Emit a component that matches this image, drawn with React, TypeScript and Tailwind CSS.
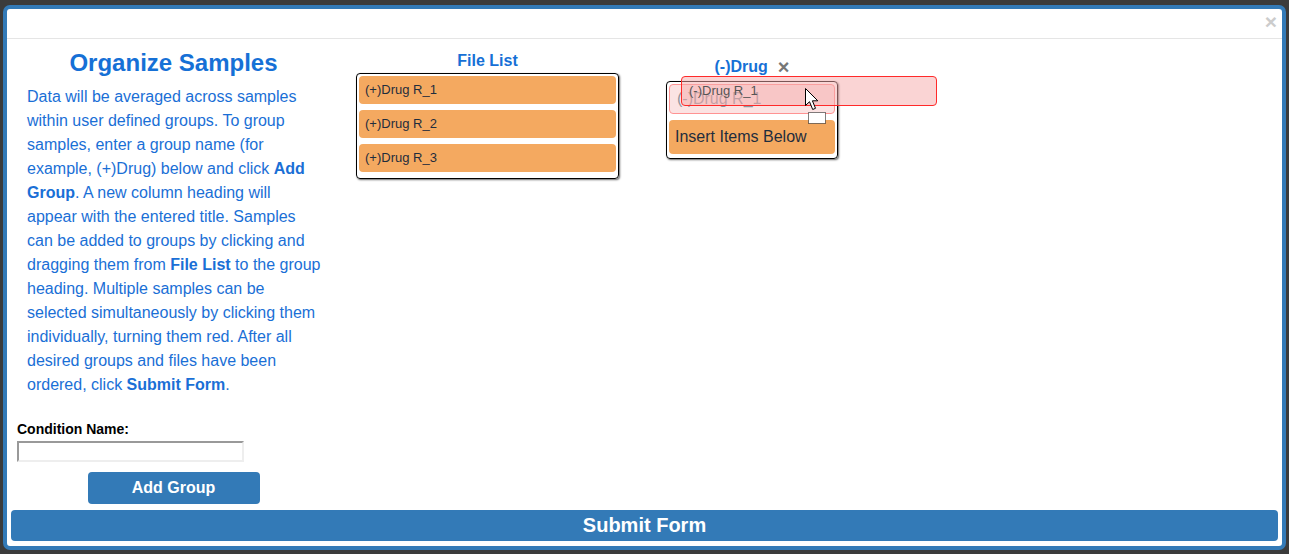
import React from 'react';

const files = ['(+)Drug R_1', '(+)Drug R_2', '(+)Drug R_3'];

function Cursor() {
  return (
    <svg width="26" height="40" viewBox="0 0 26 40" className="absolute left-[804px] top-[87px]">
      <path
        d="M1.5 1.5 L1.5 18.5 L5.5 14.7 L8.7 22.5 L11.5 21.3 L8.4 13.8 L13.8 13.8 Z"
        fill="white"
        stroke="black"
        strokeWidth="1"
      />
      <rect x="4.5" y="25.5" width="17" height="11" fill="white" stroke="black" strokeWidth="1" strokeDasharray="1 1" />
    </svg>
  );
}

export default function App() {
  return (
    <div className="w-[1289px] h-[554px] bg-[#3b3b3b] pt-[5px] pl-[3px] font-['Liberation_Sans',Arial,sans-serif]">
      <div className="relative w-[1283px] h-[545px] bg-white border-4 border-[#337ab7] rounded-[7px] flex flex-col">
        <div className="h-[31px] border-b border-[#e5e5e5] flex justify-end items-start pr-[5px]">
          <span className="text-[21px] leading-[26px] font-bold text-[#cccccc]">×</span>
        </div>

        <div className="flex-1 flex">
          {/* instructions column */}
          <div className="w-[313px] ml-[10px] flex flex-col">
            <h1 className="mt-[10px] h-[28px] text-center text-[24px] leading-[28px] font-bold text-[#1670d6]">
              Organize Samples
            </h1>
            <p className="mt-[8px] ml-[10px] w-[296px] text-[16px] leading-[24px] text-[#1a6fd6]">
              Data will be averaged across samples within user defined groups. To group samples, enter a group
              name (for example, (+)Drug) below and click <b>Add Group</b>. A new column heading will appear with
              the entered title. Samples can be added to groups by clicking and dragging them from{' '}
              <b>File List</b> to the group heading. Multiple samples can be selected simultaneously by clicking
              them individually, turning them red. After all desired groups and files have been ordered, click{' '}
              <b>Submit Form</b>.
            </p>
            <label className="mt-[24px] text-[14px] leading-[16px] font-bold text-black">Condition Name:</label>
            <input
              type="text"
              className="mt-[4px] w-[227px] h-[21px] border-2 border-t-[#999999] border-l-[#999999] border-b-[#eeeeee] border-r-[#eeeeee] outline-none"
            />
            <button className="mt-[10px] self-center w-[172px] h-[32px] rounded-[4px] bg-[#337ab7] text-white text-[16px] font-bold">
              Add Group
            </button>
          </div>

          {/* file list column */}
          <div className="ml-[26px] w-[263px] flex flex-col">
            <h2 className="mt-[13px] text-center text-[16px] leading-[18px] font-bold text-[#1670d6]">File List</h2>
            <div className="mt-[3px] border border-black rounded-[4px] p-[2px] pb-0 shadow-[1px_1px_2px_rgba(0,0,0,0.6)]">
              {files.map((f) => (
                <div
                  key={f}
                  className="h-[28px] mb-[6px] rounded-[4px] bg-[#f4a960] pl-[6px] flex items-center text-[13px] text-[#1f2d3d]"
                >
                  {f}
                </div>
              ))}
            </div>
          </div>

          {/* group column */}
          <div className="ml-[47px] w-[172px] flex flex-col">
            <div className="mt-[19px] flex justify-center items-center gap-[10px] h-[18px]">
              <span className="text-[16px] font-bold text-[#1670d6]">(-)Drug</span>
              <span className="text-[20px] leading-[18px] font-bold text-[#777777]">×</span>
            </div>
            <div className="mt-[5px] border border-black rounded-[4px] p-[2px] pb-[4px] shadow-[1px_1px_2px_rgba(0,0,0,0.6)]">
              <div className="h-[30px] rounded-[4px] border border-[#ff2a2a] bg-[#f9c9c9] pl-[7px] flex items-center text-[16px] text-[#1f2d3d] opacity-50">
                (-)Drug R_1
              </div>
              <div className="mt-[6px] h-[34px] rounded-[4px] bg-[#f4a960] pl-[6px] flex items-center text-[16px] text-[#1f2d3d]">
                Insert Items Below
              </div>
            </div>
          </div>
        </div>

        <button className="mx-[4px] mb-[5px] mt-[6px] h-[31px] rounded-[4px] bg-[#337ab7] text-white text-[20px] font-bold leading-[31px]">
          Submit Form
        </button>

        {/* dragged item ghost */}
        <div className="absolute left-[674px] top-[67px] w-[256px] h-[30px] rounded-[4px] border border-[#ff2a2a] bg-[#f5aaaa]/50 pl-[7px] flex items-center text-[13px] text-[#555555]">
          (-)Drug R_1
        </div>
      </div>
      <div className="absolute left-0 top-0">
        <Cursor />
      </div>
    </div>
  );
}
